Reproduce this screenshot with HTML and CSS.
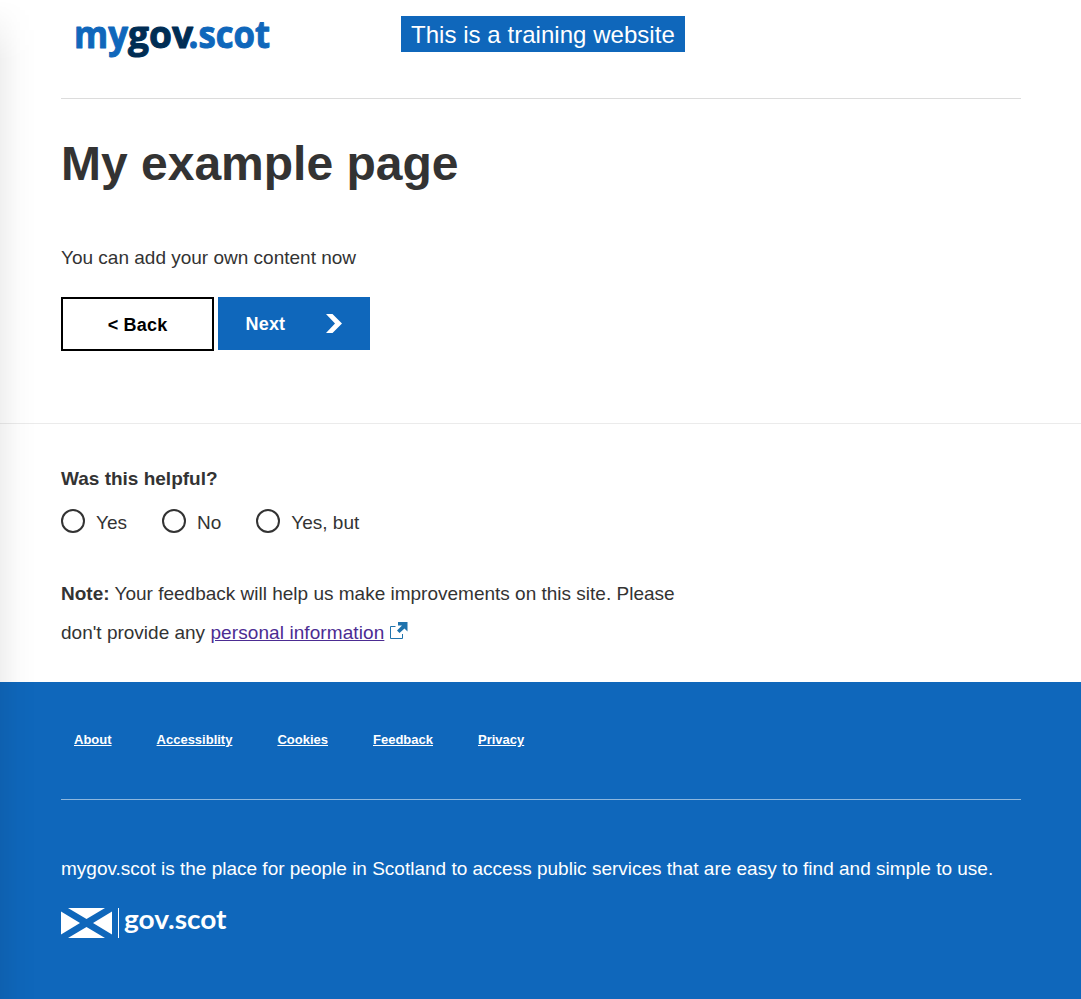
FILE: index.html
```
<!DOCTYPE html>
<html lang="en">
<head>
<meta charset="utf-8">
<title>My example page</title>
<link rel="stylesheet" href="styles.css">
</head>
<body>
<div class="page">
  <header class="site-header">
    <svg class="logo" width="210" height="48" viewBox="0 0 210 48" role="img" aria-label="mygov.scot">
      <g class="logo-text">
        <text class="logo-blue" x="11" y="31.500" textLength="54" lengthAdjust="spacingAndGlyphs">my</text>
        <text class="logo-navy" x="65" y="31.500" textLength="65" lengthAdjust="spacingAndGlyphs">gov</text>
        <text class="logo-blue" x="125.500" y="31.500" textLength="81.500" lengthAdjust="spacingAndGlyphs">.scot</text>
      </g>
    </svg>
    <div class="banner">This is a training website</div>
  </header>
  <main class="content">
    <h1 class="title">My example page</h1>
    <p class="intro">You can add your own content now</p>
    <div class="buttons">
      <button class="button button-back">&lt; Back</button>
      <button class="button button-next">Next
        <svg width="16" height="19" viewBox="0 0 16 19"><path d="M0 0H6.500L16 9.500L6.500 19H0L9 9.500Z" fill="#fff"/></svg>
      </button>
    </div>
  </main>
  <section class="feedback">
    <h2 class="question">Was this helpful?</h2>
    <div class="options">
      <label class="option"><input class="radio" type="radio" name="helpful"><span>Yes</span></label>
      <label class="option"><input class="radio" type="radio" name="helpful"><span>No</span></label>
      <label class="option"><input class="radio" type="radio" name="helpful"><span>Yes, but</span></label>
    </div>
    <p class="note"><b>Note:</b> Your feedback will help us make improvements on this site. Please<br>don't provide any <a class="info-link" href="#">personal information</a><svg class="external" width="18" height="18" viewBox="0 0 18 18"><path d="M5.500 4.500H.5V16.500H12.500V12" fill="none" stroke="#1f73ad"/><path d="M8 0H17.500V9.500L14.500 6.500L9.500 11L7 8.500L12 3.500H8Z" fill="#1f73ad"/></svg></p>
  </section>
  <footer class="footer">
    <nav class="links">
      <a href="#">About</a><a href="#">Accessiblity</a><a href="#">Cookies</a><a href="#">Feedback</a><a href="#">Privacy</a>
    </nav>
    <p class="about">mygov.scot is the place for people in Scotland to access public services that are easy to find and simple to use.</p>
    <svg class="gov-logo" width="170" height="40" viewBox="0 0 170 40" role="img" aria-label="gov.scot">
      <path d="M7 0H44L25.500 11ZM7 30H44L25.500 19ZM0 3.500V26.500L19 15ZM51 3.500V26.500L32 15Z" fill="#fff"/>
      <path d="M57.500 0V30" stroke="#fff"/>
      <text class="gov-text" x="63" y="20.500" textLength="102.500" lengthAdjust="spacingAndGlyphs">gov.scot</text>
    </svg>
  </footer>
  <div class="edge-shade"></div>
</div>
</body>
</html>
```
FILE: styles.css
```
* { box-sizing: border-box; }
body { margin: 0; background: #fff; color: #333; font: 19px/32px "Liberation Sans", Arial, sans-serif; }
.page { position: relative; height: 999px; overflow: hidden; }
.site-header { height: 99px; margin: 0 60px 0 61px; border-bottom: 1px solid #dcdcdc; display: flex; align-items: flex-start; gap: 128px; padding-top: 16px; }
.logo { overflow: visible; margin-left: 2px; }
.logo-text { font: 700 38px "Open Sans", sans-serif; stroke-width: 1; stroke-linejoin: round; }
.logo-blue { fill: #0f67bb; stroke: #0f67bb; }
.logo-navy { fill: #002d54; stroke: #002d54; }
.banner { width: 284px; height: 36px; padding-left: 10px; background: #0f67bb; color: #fff; font-size: 24px; line-height: 38px; letter-spacing: .04px; white-space: nowrap; }
.content { height: 325px; padding: 37px 60px 0 61px; border-bottom: 1px solid #ebebeb; }
.title { margin: 0; font-size: 48px; line-height: 56px; }
.intro { margin: 50px 0 23px; }
.buttons { display: flex; gap: 4px; align-items: flex-start; }
.button { font: bold 18px/24px "Liberation Sans", Arial, sans-serif; letter-spacing: .2px; padding: 0; }
.button-back { width: 153px; height: 54px; border: 2px solid #000; background: #fff; color: #000; padding-top: 2px; }
.button-next { width: 152px; height: 53px; border: 0; background: #0f67bb; color: #fff; display: flex; align-items: center; justify-content: space-between; padding: 0 28px 0 27.5px; }
.feedback { height: 258px; padding: 39px 60px 0 61px; }
.question { margin: 0; font-size: 19px; line-height: 32px; }
.options { display: flex; gap: 35px; margin-top: 10px; height: 34px; }
.option { display: flex; align-items: flex-start; gap: 11px; line-height: 36px; }
.radio { appearance: none; width: 24px; height: 24px; margin: 4px 0 0; border: 2px solid #333; border-radius: 50%; background: #fff; }
.note { margin: 35px 0 0; line-height: 39px; white-space: nowrap; }
.info-link { color: #4c2c92; letter-spacing: .09px; }
.external { margin-left: 6px; vertical-align: -1px; }
.footer { height: 317px; padding: 0 60px 0 61px; background: #0f67bb; color: #fff; }
.links { display: flex; gap: 45px; height: 118px; padding: 42px 0 0 13px; border-bottom: 1px solid #8db7de; font-size: 13px; font-weight: bold; }
.links a { color: #fff; }
.about { margin: 53px 0 23px; white-space: nowrap; }
.gov-logo { display: block; overflow: visible; }
.gov-text { font: 700 27px Lato, sans-serif; fill: #fff; }
.edge-shade { position: absolute; inset: 0 auto 0 0; width: 36px; background: linear-gradient(90deg, rgba(0,0,0,.06), rgba(0,0,0,.015) 50%, transparent); -webkit-mask-image: linear-gradient(transparent, #000 60px); mask-image: linear-gradient(transparent, #000 60px); pointer-events: none; }
```
